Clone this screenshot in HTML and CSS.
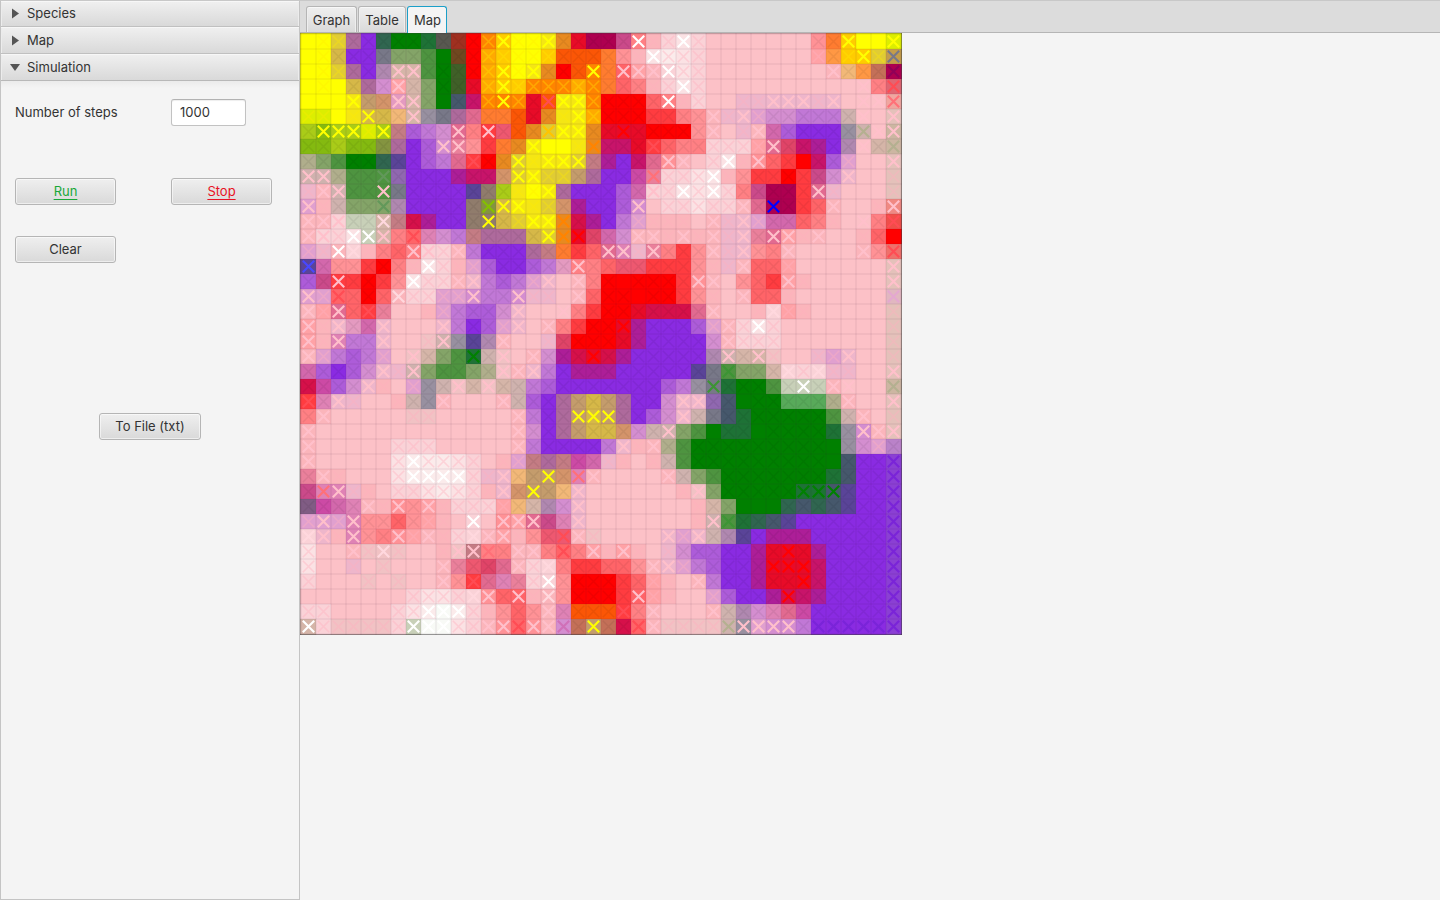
FILE: index.html
```html
<!DOCTYPE html>
<html lang="en">
<head>
<meta charset="utf-8">
<title>Simulation</title>
<link rel="stylesheet" href="styles.css">
</head>
<body>
<div class="app">
  <aside class="sidebar">
    <div class="pane-title"><svg class="arrow" viewBox="0 0 11 11"><path d="M2 0.5 L9 5.5 L2 10.5 Z"/></svg>Species</div>
    <div class="pane-title"><svg class="arrow" viewBox="0 0 11 11"><path d="M2 0.5 L9 5.5 L2 10.5 Z"/></svg>Map</div>
    <div class="pane-title open"><svg class="arrow" viewBox="0 0 11 11"><path d="M0 2 L10 2 L5 9 Z"/></svg>Simulation</div>
    <div class="pane-body">
      <div class="form">
        <label class="label" for="steps">Number of steps</label>
        <input class="field" id="steps" value="1000">
        <button class="btn run">Run</button>
        <button class="btn stop">Stop</button>
        <button class="btn clear">Clear</button>
      </div>
      <button class="btn export">To File (txt)</button>
    </div>
  </aside>
  <main class="main">
    <nav class="tabs">
      <div class="tab graph">Graph</div>
      <div class="tab table">Table</div>
      <div class="tab map active">Map</div>
    </nav>
    <canvas class="world" id="world" width="602" height="602"></canvas>
  </main>
</div>
<script src="map.js"></script>
</body>
</html>
```

FILE: styles.css
```css
* { box-sizing: border-box; }
body { margin: 0; background: #f4f4f4; color: #333; font: 13px/18px Inter, "Liberation Sans", sans-serif; }
.app { display: flex; width: 1440px; height: 900px; overflow: hidden; }
.sidebar { display: flex; flex-direction: column; width: 300px; border: 1px solid #c4c4c4; border-top-color: #c8c8c8; }
.pane-title { display: flex; align-items: center; height: 27px; padding-left: 9px; border-bottom: 1px solid #c0c0c0; background: linear-gradient(#f0f0f0, #d9d9d9); box-shadow: inset 0 1px #f7f7f7, inset 1px 0 #ececec, inset -1px 0 #ececec; }
.pane-title:first-child { height: 26px; padding-bottom: 1px; }
.pane-title.open { border-bottom-color: #b8b8b8; }
.arrow { width: 11px; height: 11px; margin-right: 6px; fill: #555; }
.pane-body { flex: 1; display: flex; flex-direction: column; align-items: center; background: linear-gradient(#ebebeb, #f4f4f4 7px); padding-top: 18px; }
.form { display: grid; grid-template-columns: 156px 101px; grid-template-rows: 27px 52px 27px 31px 27px; width: 270px; align-items: center; }
.label { padding-bottom: 2px; }
.field { width: 75px; height: 27px; padding: 0 8px 2px; border: 1px solid #c2c2c2; border-top-color: #b2b2b2; border-radius: 3px; background: #fff; box-shadow: inset 0 1px 1px #eee; font: inherit; color: #333; outline: 0; }
.btn { width: 101px; height: 27px; padding: 0 0 2px; border: 1px solid #b5b5b5; border-radius: 3px; background: linear-gradient(#efefef, #d9d9d9); box-shadow: inset 0 0 0 1px rgba(255,255,255,.55); font: inherit; color: #333; }
.run { grid-row: 3; color: #18a838; text-decoration: underline; text-underline-offset: 3px; }
.stop { grid-row: 3; color: #e81224; text-decoration: underline; text-underline-offset: 3px; }
.clear { grid-row: 5; }
.export { margin-top: 150px; width: 102px; }
.main { flex: 1; display: flex; flex-direction: column; align-items: flex-start; }
.tabs { display: flex; align-items: flex-end; gap: 1px; width: 100%; height: 33px; padding-left: 6px; background: #dcdcdc; border-top: 1px solid #c8c8c8; border-bottom: 1px solid #b5b5b5; }
.tab { height: 26px; padding-top: 4px; text-align: center; border: 1px solid #b5b5b5; border-bottom: 0; border-radius: 3px 3px 0 0; background: linear-gradient(#efefef, #dadada); box-shadow: inset 0 1px #f8f8f8, inset 1px 0 #eee, inset -1px 0 #eee; }
.graph { width: 51px; }
.table { width: 48px; }
.map { width: 40px; }
.tab.active { height: 27px; padding: 4px 0 0 1px; margin-bottom: -1px; background: #f4f4f4; border-color: #1b9fc8; box-shadow: none; }
.world { display: block; width: 602px; height: 602px; }
```

FILE: map.js
```js
// Cell fill colours, one key per terrain blend
const fills = {
  '.': '#fcc1c7', ',': '#fad2d7', ':': '#fbe2e4', w: '#fbebeb', W: '#f8faf6', i: '#f1c2c4',
  p: '#eeb6cb', q: '#e0a0cf', u: '#d48ed0', v: '#c178d6', V: '#ad5cd9', P: '#8a2be2',
  R: '#ff0000', r: '#ff3c40', s: '#ff6468', t: '#ff8084', T: '#ff9296', o: '#ffa2a6', O: '#fbb5bb',
  m: '#c8146a', M: '#ad1e98', d: '#d6104a', D: '#ae0050', e: '#e80b28',
  n: '#cc4aa5', N: '#d368ac', k: '#df82b5', K: '#e26a90', l: '#ea809b', h: '#cb4a8a', H: '#e04468', j: '#ee5870', J: '#e49ac0',
  G: '#008000', g: '#4e9440', f: '#84a468', F: '#b0ae8c', b: '#d5b5a8', B: '#cfb2ae', a: '#c8d0b8', A: '#58aa5a',
  z: '#1e7236', Z: '#306650', x: '#46586c', X: '#5a4498', y: '#787888', 9: '#9890a0', 8: '#b088b0', 7: '#9068b0',
  Y: '#ffff00', 1: '#f4e614', 2: '#e0cc34', 3: '#d6b848', 4: '#c49c6c', 5: '#d4946a', 6: '#ae6a9c',
  0: '#ff8400', I: '#ffaa00', L: '#ffcc00', U: '#fb5606', S: '#ff7c30', E: '#e88a20',
  C: '#dcee00', c: '#aacc18', Q: '#84ba10',
  '!': '#585850', '@': '#a03020', '#': '#704820', $: '#406028', '%': '#ff9844', '&': '#cc9840',
  '^': '#f2b878', '~': '#c47058', '`': '#c47c84', '*': '#849440', '(': '#907c6c', '|': '#805c84'
};
// Marker stroke colours
const marks = {
  y: '#ffff00', p: '#ffc0cb', w: '#ffffff', L: '#ffd8de', r: '#ff4c54', R: '#ff0000', s: '#ff7078',
  g: '#3c9434', G: '#008000', b: '#0000ff', B: '#4848ff', t: '#787888', D: '#900058', o: '#ff8400',
  I: '#ffc400', F: '#b4b090', f: '#62985a', Q: '#84c000', q: '#e4a8d0', u: '#d070b8', v: '#7a24d8'
};
// One row per line: forty fills, then the marked columns
const rows = `
YY26PZGGz!@R0LYY1EeDDhtO,:,.......TSLYYC 13y 16y 22w 25w 36y 37y 38y 39y
YY3PPyffgG#RILYYLUUUSTO:w:,.......o%LL2& 9G 23w 37y 39t
YY26P8bbgG$RILY1ERU0SsoO,:,........O^%~D 6p 7p 13y 15y 19y 21p 22p 23p 24w 35p 39D
YYY36uobfG$eILL000I0SstO,:,...........tj 2y 6p 13y 25w 37p 39r
YYY145JbfGxm000eU110RRRstO,..ppppppp...o 0y 1y 2y 3y 6p 7p 9G 13y 16r 17y 18y 24w 31p 32p 33p 35p 37p 38p 39s
CCY133^b9y6KSSUeE11IRRRrrtTOppquuvvvB..i 2y 4y 7p 18y 27p 29p 37p 39p
cQccCc\`VvuKtrjUE211EeeeRRRTO.pONVPPP9B.b 1y 2y 3y 5y 10p 12p 16I 17y 18y 21R 27p 30p 37F 38p 39p
QQcQQ*6PVulTrSE1YY1Emmerstt,,,oKHmMP8.bb 9p 10p 15y 16y 17y 19o 23r 31p 37p 39F
FfgGGZXPVvKrRE21112\`MPmKTO.,:OTsrRmVq..i 14y 16y 17y 18y 24p 25p 28w 30p 33R 39p 11r
BBFggg7PPPMmm5212246PPnl,,::OTrrRrhup..i 0p 1p 5f 14y 15y 23s 27w 36p
pOBgggyPPPPX(c1Y16PPPVN,,:::,thDDrKp...i 1p 2p 5p 16y 23p 25w 27w 34p
qOBfff8PPPP(*31125MPPVu.,,:,,OKDDrsO..Ot 0p 5f 12Q 13y 14y 22p 29p 31b 35p 39p
OO,aab\`dMPP((3211EdMPvqOOO.OppqNNstO..tr 0p 1p 2p 5L 12y 15y 16y 17o 27p 29p 37p 39r
O,,:abtskuv\`66632EeHNuOOOOOOpplKoOO..OsR 0p 1p 3w 4w 5p 7r 16y 17o 18R 22p 23p 25p 27p 29p 31p 32p 34p 39R
qpO,Otst,,OvPPP6\`SrsKkpltrTOppTtO....OTs 2w 3L 7p 8p 10p 20p 21p 23p 27p 29p 32p 37p 39r
XNTTrRtO:,OqVPPVvJttsjjrrrTOpOsso......i 0B 8w 18p 29p 39p
VhrrRrT:,,OpvVvqp.OtRRRRRrTO.TsroO.....i 2p 7w 10p 11p 16p 18p 21R 26p 27p 32p 39p
qqssRsO,,qquvvupp.OsRRRRRrTO.OssO......p 0p 2r 6L 11p 14p 18p 22R 29p 39q
OoKsrl..OqvVVup...trRRedddKO..O,oO.....i 0p 2p 4r 14p 17p 27p 31L
oOpJNp...pvPVqp.OtrRReMPPPVqO,:,.......i 0p 2p 5p 9p 14p 16p 21R 28p 30w
oOkvvp..iB9X8O..pHRRReMPPPPuO,,,.......i 0p 2p 5p 9p 13p 28p
OqvVvq.ibfgzBi.OuMdedMPPPPP8Bbbi..pqp..i 0p 7p 11G 13p 15p 19R 28p 30p 36p
NVPVuppBfggfFiOpvPMMMPPPPPXygffb,,,pp..i 5p 7p 13p 14p 15p 28g 32L 34L 39p
dnVupO.q9BibibBvVPPPPPPPVv9yzGGgaaaO...b 4p 10p 12p 27g 33w 35p 36p 39F
rkpp..OB9O...OBVP64346PPupp7xGGGAAAFO..i 0r 2p 9p 13p 25p 26p 29G 36p 39p
tO.....ii.....OvP64346PVupByxzGGGGGgBO.i 1p 14p 18y 19y 20y 25p 37p
O.............OuP64335uBBfgGzzGGGGGz9uOi 0p 14p 24p 27G 30G 37p 38p 39p
O.....,,,.....OvPPPPvpOOFgGGGGGGGGGG9uqv 0p 14p 21p 23p 35G
O.....:www:,.Oq\`6\`nNpO.OBgGGGGGGGGGGxPPP 0p 7w 35G 39v
lOO...:wwww,pp^445kO....OBfgGGGGGGGzxPPP 1p 7w 8w 9w 10w 13p 16y 18s 19p 24p 39v
hkkpO.,,:w:,Op544^p......OifGGGGGzzxXPPP 1s 2p 13p 15y 18p 26p 33G 34G 35G 39v
|nNkOOTToO,,,o^b8up.......ObfGGGZxZxXPPP 4p 6p 8p 18p 29G 30G 31G 39v
qqqkTTsToO.,.ToKhkp.......OBgzZxXPPPPPPP 1p 3p 11w 13p 14p 15p 18p 27p 28g 39v
,pOkTtToOO,,OoOTjjOi....pqpB8XPMMMPPPPPP 0L 1p 3p 6p 8p 11L 12p 13p 17r 18p 24p 26p 39v
:..Oiii..Oi\`ttOOtstoOoO.puVVPPMeeeMPPPPP 3p 5L 10p 11p 12s 14p 15p 17r 19p 21p 32R 39v
:..p.i...OljHKO,,trrssTOpqvVPPMeeemPPPPP 9p 14p 16L 23p 24p 31R 32R 33R 39v
,...i.i..OTrKkl,,TRRRrsoO.OvPPMeeemPPPPP 9p 11r 16w 26p 33R 39v
.......,::,,TssOOTRRRrsoO..qVPPMdmMPPPPP 11L 12p 14p 16L 22p 32R 39v
,,....,:wWw,OTsTOkUUUrtO...OB8ukKnPPPPPP 8w 9w 10w 16p 21r 23p 27p 39v
b,iiii,aWW:,OTsTOu~4~dsOiiiiB9quuvPPPPPP 0w 7w 8w 9w 12p 13p 14r 15p 16p 17u 19y 22r 23p 28F 29p 30p 31p 32p 34v 35v 36v 37v 38v 39v
`.trim().split('\n');

const size = 15;
const ctx = document.getElementById('world').getContext('2d');

function cross(col, row, color, width) {
  const x = 1 + col * size, y = 1 + row * size;
  ctx.strokeStyle = color;
  ctx.lineWidth = width;
  ctx.beginPath();
  ctx.moveTo(x + 1.8, y + 1.8);
  ctx.lineTo(x + 13.2, y + 13.2);
  ctx.moveTo(x + 13.2, y + 1.8);
  ctx.lineTo(x + 1.8, y + 13.2);
  ctx.stroke();
}

rows.forEach((line, row) => {
  const [cells, ...list] = line.split(' ');
  const marked = new Set(list.map(m => parseInt(m, 10)));
  [...cells].forEach((key, col) => {
    const x = col ? 1 + col * size : 0, y = row ? 1 + row * size : 0;
    ctx.fillStyle = fills[key];
    ctx.fillRect(x, y, 602 - x, 1 + (row + 1) * size - y + (row === 39 ? 1 : 0));
    if (col === 39 && !'YCDR'.includes(key)) {
      ctx.fillStyle = 'rgba(150,190,130,.14)';
      ctx.fillRect(x, y, 602 - x, size + 1);
    }
    if (!marked.has(col) && key !== '.' && !(key === 'Y' && col === 0)) {
      const faint = ',:wWipqOo'.includes(key) ? 'rgba(255,176,190,.42)' : 'YC12LI0'.includes(key) ? 'rgba(255,235,0,.35)' : 'rgba(0,0,0,.06)';
      cross(col, row, faint, 1.6);
    }
  });
  list.forEach(m => cross(parseInt(m, 10), row, marks[m.slice(-1)], 2.1));
});

// Cell outlines
ctx.fillStyle = 'rgba(60,20,50,.05)';
for (let i = 0; i <= 40; i++) {
  ctx.fillRect(i * size, 0, 2, 602);
  ctx.fillRect(0, i * size, 602, 2);
}
ctx.fillStyle = 'rgba(60,60,60,.5)';
ctx.fillRect(601, 0, 1, 602);
ctx.fillRect(0, 601, 602, 1);
ctx.fillStyle = 'rgba(60,60,60,.25)';
ctx.fillRect(0, 0, 1, 602);
ctx.fillRect(0, 0, 602, 1);
```
